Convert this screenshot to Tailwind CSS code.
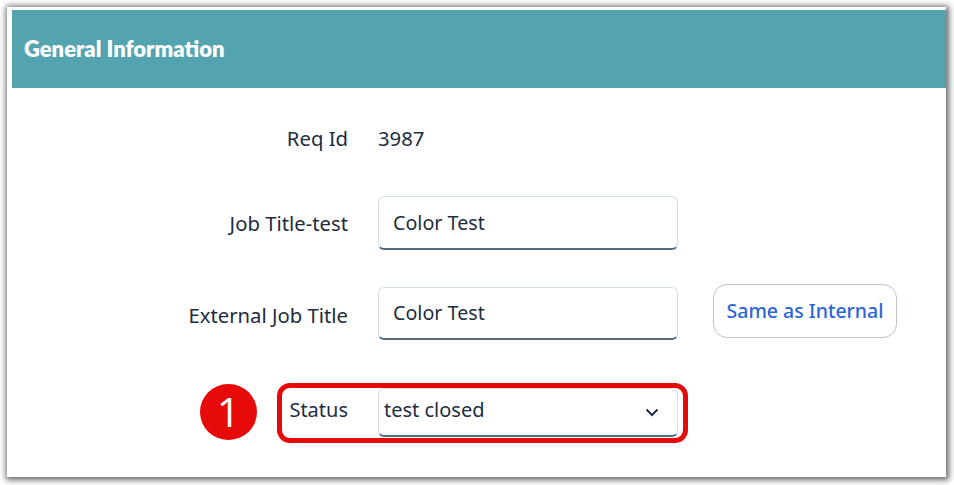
<!DOCTYPE html>
<html lang="en">
<head>
    <meta charset="UTF-8">
    <title>General Information</title>
    <script src="https://cdn.jsdelivr.net/npm/@tailwindcss/browser@4"></script>
</head>
<body class="w-[954px] h-[485px] overflow-hidden bg-white font-['Noto_Sans',sans-serif] text-[#1d2d3e]">
    <div class="ml-[7px] mt-[7px] w-[939px] h-[470px] bg-white pl-[5px] pt-[3px] shadow-[1px_1px_6px_2px_rgba(0,0,0,0.6)]">
        <div class="h-[78px] bg-[#54a4b0] flex items-center pl-3">
            <h2 class="font-['Lato',sans-serif] font-extrabold text-[22px] text-white -mt-[2px]">General Information</h2>
        </div>

        <div class="relative pt-[38px]">
            <div class="flex items-center h-[26px]">
                <label class="w-[336px] text-right text-[20.3px] -mt-[2px]">Req Id</label>
                <span class="ml-[30px] text-[20.3px] -mt-[2px]">3987</span>
            </div>

            <div class="flex items-center mt-[44px]">
                <label class="w-[336px] text-right text-[20.3px]">Job Title-test</label>
                <div class="ml-[30px] w-[300px] h-[54px] flex items-center pl-[14px] text-[19.7px] bg-white rounded-[6px] border border-[#d5dde6] border-b-2 border-b-[#556b82]">Color Test</div>
            </div>

            <div class="flex items-center mt-[37px]">
                <label class="w-[336px] text-right text-[20.3px] mt-1">External Job Title</label>
                <div class="ml-[30px] w-[300px] h-[53px] flex items-center pl-[14px] text-[19.7px] bg-white rounded-[6px] border border-[#d5dde6] border-b-2 border-b-[#556b82]">Color Test</div>
                <button class="ml-[35px] w-[184px] h-[54px] -mt-[5px] rounded-[14px] border border-[#bcc3ca] bg-white text-[#2b64d8] text-[19.5px] font-medium">Same as Internal</button>
            </div>

            <div class="flex items-center mt-[48px]">
                <label class="w-[336px] text-right text-[20px] -mt-[6px]">Status</label>
                <div class="ml-[30px] w-[300px] h-[49px] flex items-center justify-between pl-[5px] pr-[18px] text-[20px] bg-white rounded-[6px] border border-[#d5dde6] border-b-2 border-b-[#556b82]">
                    <span class="-mt-1">test closed</span>
                    <svg width="14" height="9" viewBox="0 0 14 9" fill="none"><path d="M1.5 1.5 7 7l5.5-5.5" stroke="#1d2d3e" stroke-width="2"/></svg>
                </div>
            </div>

            <!-- callout over the status row -->
            <div class="absolute left-[265px] top-[295px] w-[411px] h-[60px] rounded-[13px] border-[5px] border-[#e60a0a]"></div>
            <div class="absolute left-[188px] top-[296px] w-[57px] h-[56px] rounded-full bg-[#e60a0a] flex items-center justify-center text-white text-[41px] font-normal font-['Open_Sans',sans-serif]">1</div>
        </div>
    </div>
</body>
</html>
